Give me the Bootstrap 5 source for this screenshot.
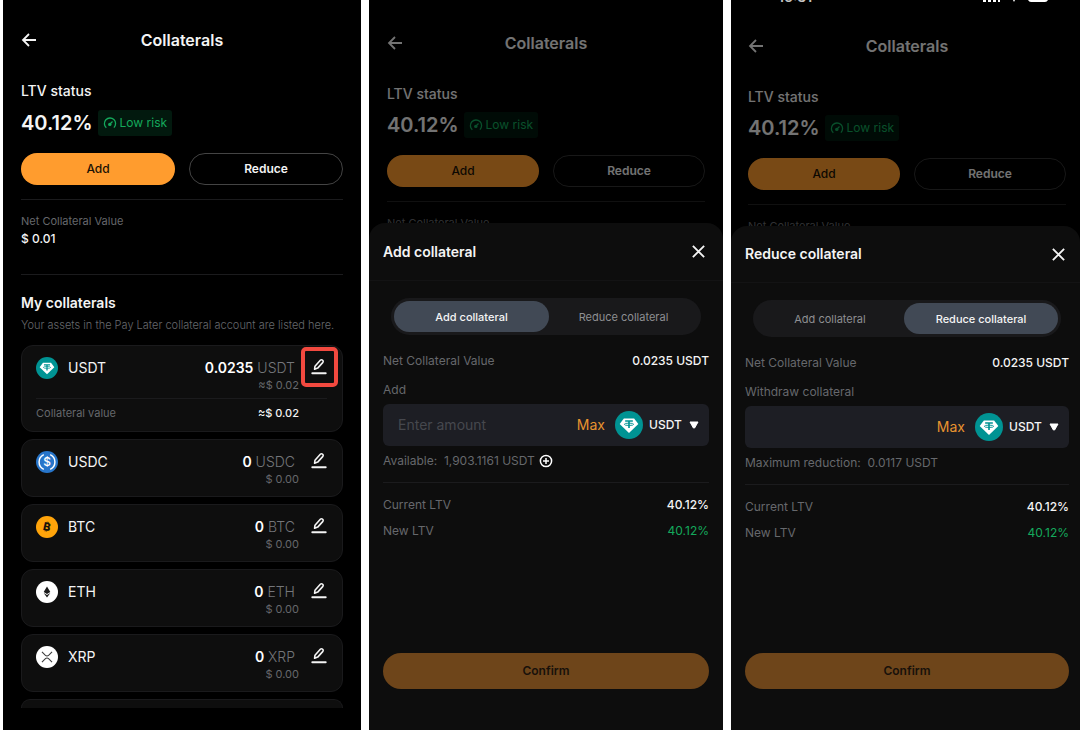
<!DOCTYPE html>
<html lang="en">
<head>
<meta charset="utf-8">
<meta name="viewport" content="width=device-width, initial-scale=1">
<title>Collaterals</title>
<link href="https://cdn.jsdelivr.net/npm/bootstrap@5.3.0/dist/css/bootstrap.min.css" rel="stylesheet">
<style>
  body { background: #fff; color: #f4f4f4; font-family: Inter, "Liberation Sans", sans-serif; }
  .phones { display: grid; grid-template-columns: 358fr 354fr 349fr; gap: 8px; padding-left: 3px; min-height: 100vh; }
  .phone { background: #000; min-width: 0; display: flex; flex-direction: column; }
  svg { display: block; flex-shrink: 0; }

  /* account screen */
  .screen { padding: 24px 18px 0; }
  .screen-head { height: 32px; margin-bottom: 25px; display: grid; grid-template-columns: 16px 1fr 16px; align-items: center; }
  .screen-head h1 { font-size: 16px; line-height: 20px; font-weight: 600; margin: 0; text-align: center; }
  .bare { background: none; border: 0; padding: 0; color: inherit; }
  .status-label { font-size: 14px; line-height: 20px; font-weight: 500; }
  .status-row { margin-top: 9px; gap: 5px; height: 26px; }
  .status-value { font-size: 20px; line-height: 26px; font-weight: 600; }
  .risk { background: #02190e; color: #14a95c; font-size: 12px; line-height: 18px; padding: 4px 5px; border-radius: 3px; gap: 3px; }
  .actions { display: grid; grid-template-columns: 1fr 1fr; gap: 14px; margin-top: 17px; }
  .pill { height: 32px; border-radius: 16px; padding: 0; font-size: 12px; line-height: 20px; font-weight: 600; }
  .pill-main, .pill-main:hover { background: #ff9c2e; color: #1c1205; border: 0; font-weight: 500; }
  .pill-line, .pill-line:hover { background: transparent; color: #f4f4f4; border: 1px solid #444; }
  .rule { height: 1px; background: #1b1b1d; }
  .rule-top { margin-top: 14px; }
  .rule-mid { margin-top: 26px; }
  .muted { color: #66686c; }
  .net-label { font-size: 11px; line-height: 18px; }
  .net-value { font-size: 12px; line-height: 18px; font-weight: 500; }
  .section-title { font-size: 14px; line-height: 20px; font-weight: 600; margin: 18px 0 4px; }
  .section-note { font-size: 11px; line-height: 16px; font-weight: 300; margin: 0 0 12px; white-space: nowrap; }

  /* asset cards */
  .asset { background: #0e0e0e; border: 1px solid #1a1a1c; border-radius: 12px; padding: 12px 15px 10px 14px; }
  .asset + .asset, .asset-peek { margin-top: 7px; }
  .asset-top { display: grid; grid-template-columns: 22px 1fr auto 16px; column-gap: 10px; }
  .asset-top > svg { margin-top: -1px; }
  .asset-name, .asset-amount { font-size: 14px; line-height: 20px; }
  .asset-amount { padding-right: 4px; font-weight: 300; color: #74767a; }
  .asset-amount b { font-weight: 600; color: #fff; }
  .asset-fiat { font-size: 11px; line-height: 14px; }
  .asset-sum { margin-right: 2px; text-align: right; }
  .asset-more { border-top: 1px solid #1b1b1d; margin-top: 6px; padding: 6px 28px 0 0; font-size: 11px; line-height: 16px; }
  .asset-peek { height: 9px; border-bottom: 0; border-radius: 12px 12px 0 0; padding: 0; margin-bottom: 22px; }
  .edit { position: relative; width: 16px; height: 18px; }
  .marked::after { content: ""; position: absolute; inset: -11px -11px -11px -10px; border: 4px solid #f2493f; border-radius: 5px; }

  /* dimmed screen behind a sheet */
  .dimmed { opacity: .47; padding: 27px 18px 0; }
  .dimmed .status-row { margin-top: 8px; }
  .dimmed .pill-line { border-color: #333; }
  .dimmed .rule { background: #222; }

  /* bottom sheet */
  .sheet { position: relative; z-index: 1; flex: 1; display: flex; flex-direction: column; margin-top: -9px; background: #0d0d0d; border-radius: 16px 16px 0 0; padding-bottom: 41px; }
  .sheet-head { height: 58px; padding: 0 14px; border-bottom: 1px solid #131314; }
  .sheet-head h2 { font-size: 14px; line-height: 20px; font-weight: 600; margin: 0; }
  .sheet-head button { padding: 4px; }
  .sheet-body { padding: 17px 14px 0; flex: 1; display: flex; flex-direction: column; }
  .switch { margin: 0 8px 16px; padding: 3px; border-radius: 19px; background: #19191b; display: flex; }
  .switch button { flex: 149 1 0; padding: 0; height: 31px; border: 0; border-radius: 16px; background: none; color: #8e8f92; font-size: 11px; line-height: 16px; font-weight: 400; }
  .switch button.on { flex-grow: 155; background: #414955; color: #f4f4f4; font-weight: 500; }
  .line { font-size: 12px; line-height: 20px; }
  .line .fw { font-weight: 500; color: #f4f4f4; }
  .line .good { color: #14a95c; }
  .gap-label { margin-top: 9px; }
  .gap-hint { margin-top: 5px; }
  .gap-line { margin-top: 6px; }
  .rule-sheet { margin: 11px 0 12px; }
  .amount { background: #1d1e24; border-radius: 6px; height: 42px; margin-top: 4px; padding: 0 9px 0 15px; }
  .amount input { flex: 1; min-width: 0; width: 0; background: none; border: 0; outline: 0; padding: 0; color: #f4f4f4; font-size: 14px; line-height: 20px; }
  .amount input::placeholder { color: #46484e; opacity: 1; }
  .max { color: #e8932f; font-size: 14px; line-height: 20px; margin-right: 10px; }
  .amount select { appearance: none; border: 0; outline: 0; padding: 0 18px 0 0; margin-left: 6px; font-size: 12px; line-height: 20px; font-weight: 500; color: #f4f4f4;
    background: url("data:image/svg+xml,%3Csvg xmlns='http://www.w3.org/2000/svg' viewBox='0 0 10 8'%3E%3Cpath d='M1 1h8L5.600 7H4.400z' fill='%23fff' stroke='%23fff' stroke-linejoin='round'/%3E%3C/svg%3E") no-repeat right 1px center / 10px 8px transparent; }
  .confirm, .confirm:disabled { margin-top: auto; height: 36px; border-radius: 18px; border: 0; padding: 0; background: #6e451a; color: #18110a; font-size: 12px; line-height: 20px; font-weight: 600; opacity: 1; }

  /* third phone: status bar is partly scrolled away */
  .statusbar { height: 4px; overflow: hidden; display: flex; align-items: flex-end; justify-content: space-between; padding: 0 30px 0 47px; font-size: 14px; line-height: 14px; font-weight: 600; color: #c4c4c4; }
  .tight .dimmed { padding: 26px 14px 0 17px; }
  .tight .sheet-head { height: 57px; padding-right: 11px; }
  .tight .sheet-body { padding-right: 11px; }
</style>
</head>
<body>
<svg width="0" height="0" class="position-absolute" aria-hidden="true">
  <symbol id="i-back" viewBox="0 0 16 16"><path d="M8 2 2 8l6 6M2 8h13" fill="none" stroke="currentColor" stroke-width="1.8"/></symbol>
  <symbol id="i-close" viewBox="0 0 12 12"><path d="M.8.8l10.400 10.400M11.200.8.8 11.200" fill="none" stroke="currentColor" stroke-width="1.700"/></symbol>
  <symbol id="i-gauge" viewBox="0 0 14 14"><path d="M3.300 11.800A5.600 5.600 0 1 1 10.900 11.600" fill="none" stroke="currentColor" stroke-width="1.300"/><path d="M6.500 8.500 9.500 5.500" stroke="currentColor" stroke-width="1.300"/><circle cx="6.800" cy="8.400" r="1.700" fill="currentColor"/></symbol>
  <symbol id="i-edit" viewBox="0 0 16 18"><path d="M3.600 11.200 4 8.200l5.300-5.900q1-1 2.200-.2 1.300 1 .4 2.300L6.700 10.100Z" fill="none" stroke="currentColor" stroke-width="1.600" stroke-linejoin="round"/><path d="M1.300 15.200h13.400" stroke="currentColor" stroke-width="2" stroke-linecap="round"/></symbol>
  <symbol id="i-plus" viewBox="0 0 14 14"><path d="M7 1.400a5.600 5.600 0 1 0 0 11.200A5.600 5.600 0 1 0 7 1.400M7 4v6M4 7h6" fill="none" stroke="currentColor" stroke-width="1.500"/></symbol>
  <symbol id="c-usdt" viewBox="0 0 24 24"><circle cx="12" cy="12" r="12" fill="#009393"/><path d="M7.600 6.400h8.800L20 11.200 12 18.800 4 11.200Z" fill="#fff"/><path d="M8.700 8.600h6.600M12 8.600v6" stroke="#009393" stroke-width="1.400"/><ellipse cx="12" cy="11.400" rx="4" ry="1" fill="none" stroke="#009393" stroke-width=".8"/></symbol>
  <symbol id="c-eth" viewBox="0 0 24 24"><circle cx="12" cy="12" r="12" fill="#fff"/><path d="M12 6l3.600 6.100L12 14.200l-3.600-2.100ZM8.400 13.200 12 15.300l3.600-2.100L12 18Z" fill="#1b1b1b"/></symbol>
  <symbol id="c-xrp" viewBox="0 0 24 24"><circle cx="12" cy="12" r="12" fill="#fff"/><path d="M6.500 6.500 10 10q2 1.700 4 0l3.500-3.500M6.500 17.500 10 14q2-1.700 4 0l3.500 3.500" fill="none" stroke="#3b3b3b" stroke-width="1.200"/></symbol>
</svg>

<main class="phones">
  <section class="phone">
    <div class="screen">
      <header class="screen-head">
        <button class="bare" aria-label="Back"><svg width="16" height="16"><use href="#i-back"/></svg></button>
        <h1>Collaterals</h1>
      </header>
      <div class="status-label">LTV status</div>
      <div class="status-row d-flex align-items-center">
        <span class="status-value">40.12%</span>
        <span class="risk d-flex align-items-center"><svg width="14" height="14"><use href="#i-gauge"/></svg>Low risk</span>
      </div>
      <div class="actions">
        <button class="btn pill pill-main">Add</button>
        <button class="btn pill pill-line">Reduce</button>
      </div>
      <div class="rule rule-top"></div>
      <div class="net-label muted mt-2 pt-1">Net Collateral Value</div>
      <div class="net-value">$ 0.01</div>
      <div class="rule rule-mid"></div>
      <h2 class="section-title">My collaterals</h2>
      <p class="section-note muted">Your assets in the Pay Later collateral account are listed here.</p>

      <article class="asset">
        <div class="asset-top">
          <svg width="22" height="22"><use href="#c-usdt"/></svg>
          <span class="asset-name">USDT</span>
          <div class="asset-sum">
            <div class="asset-amount"><b>0.0235</b> USDT</div>
            <div class="asset-fiat muted">≈$ 0.02</div>
          </div>
          <button class="bare edit marked" aria-label="Edit USDT"><svg width="16" height="18"><use href="#i-edit"/></svg></button>
        </div>
        <div class="asset-more d-flex justify-content-between">
          <span class="muted">Collateral value</span><span class="fw-medium">≈$ 0.02</span>
        </div>
      </article>
      <article class="asset">
        <div class="asset-top">
          <svg width="22" height="22" viewBox="0 0 24 24"><circle cx="12" cy="12" r="12" fill="#2775ca"/><path d="M8.500 4a8.800 8.800 0 0 0 0 16M15.500 4a8.800 8.800 0 0 1 0 16" fill="none" stroke="#fff" stroke-width="1.600"/><text x="12" y="16.500" text-anchor="middle" font-size="13" font-weight="500" fill="#fff">$</text></svg>
          <span class="asset-name">USDC</span>
          <div class="asset-sum">
            <div class="asset-amount"><b>0</b> USDC</div>
            <div class="asset-fiat muted">$ 0.00</div>
          </div>
          <button class="bare edit" aria-label="Edit USDC"><svg width="16" height="18"><use href="#i-edit"/></svg></button>
        </div>
      </article>
      <article class="asset">
        <div class="asset-top">
          <svg width="22" height="22" viewBox="0 0 24 24"><circle cx="12" cy="12" r="12" fill="#ffa40a"/><text x="12" y="16" text-anchor="middle" font-size="12" font-weight="800" fill="#17120a" transform="rotate(13 12 12)">₿</text></svg>
          <span class="asset-name">BTC</span>
          <div class="asset-sum">
            <div class="asset-amount"><b>0</b> BTC</div>
            <div class="asset-fiat muted">$ 0.00</div>
          </div>
          <button class="bare edit" aria-label="Edit BTC"><svg width="16" height="18"><use href="#i-edit"/></svg></button>
        </div>
      </article>
      <article class="asset">
        <div class="asset-top">
          <svg width="22" height="22"><use href="#c-eth"/></svg>
          <span class="asset-name">ETH</span>
          <div class="asset-sum">
            <div class="asset-amount"><b>0</b> ETH</div>
            <div class="asset-fiat muted">$ 0.00</div>
          </div>
          <button class="bare edit" aria-label="Edit ETH"><svg width="16" height="18"><use href="#i-edit"/></svg></button>
        </div>
      </article>
      <article class="asset">
        <div class="asset-top">
          <svg width="22" height="22"><use href="#c-xrp"/></svg>
          <span class="asset-name">XRP</span>
          <div class="asset-sum">
            <div class="asset-amount"><b>0</b> XRP</div>
            <div class="asset-fiat muted">$ 0.00</div>
          </div>
          <button class="bare edit" aria-label="Edit XRP"><svg width="16" height="18"><use href="#i-edit"/></svg></button>
        </div>
      </article>
      <div class="asset asset-peek"></div>
    </div>
  </section>

  <section class="phone">
    <div class="screen dimmed">
      <header class="screen-head">
        <button class="bare" aria-label="Back"><svg width="16" height="16"><use href="#i-back"/></svg></button>
        <h1>Collaterals</h1>
      </header>
      <div class="status-label">LTV status</div>
      <div class="status-row d-flex align-items-center">
        <span class="status-value">40.12%</span>
        <span class="risk d-flex align-items-center"><svg width="14" height="14"><use href="#i-gauge"/></svg>Low risk</span>
      </div>
      <div class="actions">
        <button class="btn pill pill-main">Add</button>
        <button class="btn pill pill-line">Reduce</button>
      </div>
      <div class="rule rule-top"></div>
      <div class="net-label muted mt-2 pt-1">Net Collateral Value</div>
    </div>
    <div class="sheet">
      <header class="sheet-head d-flex align-items-center justify-content-between">
        <h2>Add collateral</h2>
        <button class="bare" aria-label="Close"><svg width="13" height="13"><use href="#i-close"/></svg></button>
      </header>
      <div class="sheet-body">
        <div class="switch">
          <button class="on">Add collateral</button>
          <button>Reduce collateral</button>
        </div>
        <div class="line muted d-flex justify-content-between"><span>Net Collateral Value</span><span class="fw">0.0235 USDT</span></div>
        <label class="line muted gap-label" for="add-amount">Add</label>
        <div class="amount d-flex align-items-center">
          <input id="add-amount" type="text" placeholder="Enter amount">
          <button class="bare max">Max</button>
          <svg width="28" height="28"><use href="#c-usdt"/></svg>
          <select aria-label="Coin to add"><option>USDT</option></select>
        </div>
        <div class="line muted d-flex align-items-center gap-1 gap-hint"><span>Available:&nbsp; 1,903.1161 USDT</span>
          <button class="bare text-white" aria-label="Top up"><svg width="14" height="14"><use href="#i-plus"/></svg></button></div>
        <div class="rule rule-sheet"></div>
        <div class="line muted d-flex justify-content-between"><span>Current LTV</span><span class="fw">40.12%</span></div>
        <div class="line muted d-flex justify-content-between gap-line"><span>New LTV</span><span class="good">40.12%</span></div>
        <button class="btn confirm" disabled>Confirm</button>
      </div>
    </div>
  </section>

  <section class="phone tight">
    <div class="statusbar"><span>16:31</span>
      <svg width="68" height="4" viewBox="0 0 68 4" fill="#fff"><path d="M1 0h3v2H1zM6 0h3v2H6zM11 0h3v2h-3zM16 0h2v2h-2zM31 0h2l-1 2zM46 0h20q-1 2-3 2H49q-2 0-3-2z"/></svg></div>
    <div class="screen dimmed">
      <header class="screen-head">
        <button class="bare" aria-label="Back"><svg width="16" height="16"><use href="#i-back"/></svg></button>
        <h1>Collaterals</h1>
      </header>
      <div class="status-label">LTV status</div>
      <div class="status-row d-flex align-items-center">
        <span class="status-value">40.12%</span>
        <span class="risk d-flex align-items-center"><svg width="14" height="14"><use href="#i-gauge"/></svg>Low risk</span>
      </div>
      <div class="actions">
        <button class="btn pill pill-main">Add</button>
        <button class="btn pill pill-line">Reduce</button>
      </div>
      <div class="rule rule-top"></div>
      <div class="net-label muted mt-2 pt-1">Net Collateral Value</div>
    </div>
    <div class="sheet">
      <header class="sheet-head d-flex align-items-center justify-content-between">
        <h2>Reduce collateral</h2>
        <button class="bare" aria-label="Close"><svg width="13" height="13"><use href="#i-close"/></svg></button>
      </header>
      <div class="sheet-body">
        <div class="switch">
          <button>Add collateral</button>
          <button class="on">Reduce collateral</button>
        </div>
        <div class="line muted d-flex justify-content-between"><span>Net Collateral Value</span><span class="fw">0.0235 USDT</span></div>
        <label class="line muted gap-label" for="cut-amount">Withdraw collateral</label>
        <div class="amount d-flex align-items-center">
          <input id="cut-amount" type="text">
          <button class="bare max">Max</button>
          <svg width="28" height="28"><use href="#c-usdt"/></svg>
          <select aria-label="Coin to withdraw"><option>USDT</option></select>
        </div>
        <div class="line muted gap-hint">Maximum reduction:&nbsp; 0.0117 USDT</div>
        <div class="rule rule-sheet"></div>
        <div class="line muted d-flex justify-content-between"><span>Current LTV</span><span class="fw">40.12%</span></div>
        <div class="line muted d-flex justify-content-between gap-line"><span>New LTV</span><span class="good">40.12%</span></div>
        <button class="btn confirm" disabled>Confirm</button>
      </div>
    </div>
  </section>
</main>
<script src="https://cdn.jsdelivr.net/npm/bootstrap@5.3.0/dist/js/bootstrap.bundle.min.js"></script>
</body>
</html>
